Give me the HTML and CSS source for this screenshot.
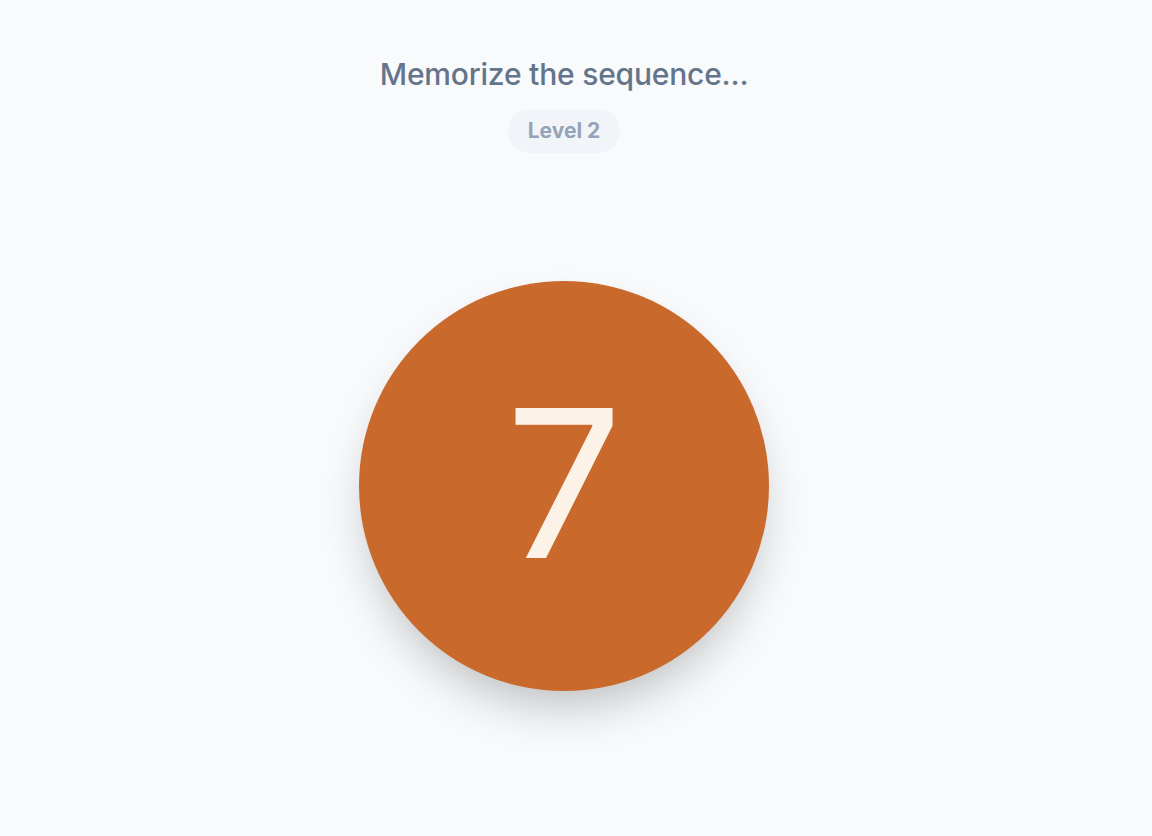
FILE: index.html
```html
<!DOCTYPE html>
<html lang="en">
<head>
<meta charset="utf-8">
<title>Memorize</title>
<link rel="stylesheet" href="styles.css">
</head>
<body>
<main class="stage">
  <h1 class="title">Memorize the sequence...</h1>
  <div class="badge">Level 2</div>
  <div class="orb"><span class="digit">7</span></div>
</main>
</body>
</html>
```
FILE: styles.css
```css
html, body {
  margin: 0;
  padding: 0;
  background: #f8fafc;
  height: 100%;
}
body {
  font-family: Inter, "Noto Sans", "Liberation Sans", sans-serif;
}
.stage {
  box-sizing: border-box;
  width: 1128px;
  padding-top: 56px;
  display: flex;
  flex-direction: column;
  align-items: center;
}
.title {
  margin: 0;
  font-size: 30px;
  line-height: 36px;
  font-weight: 500;
  color: #64748b;
  letter-spacing: -0.2px;
}
.badge {
  margin-top: 17px;
  height: 44px;
  box-sizing: border-box;
  padding: 8px 20px;
  border-radius: 22px;
  background: #f1f5f9;
  color: #94a3b8;
  font-size: 21px;
  line-height: 28px;
  font-weight: 700;
}
.orb {
  margin-top: 128px;
  width: 410px;
  height: 410px;
  border-radius: 50%;
  background: #c9692b;
  box-shadow: 0 25px 50px -12px rgba(0, 0, 0, 0.25);
  display: flex;
  align-items: center;
  justify-content: center;
}
.digit {
  font-size: 206px;
  line-height: 1;
  font-weight: 400;
  color: #fdf2e8;
  margin-top: -6px;
}
```
